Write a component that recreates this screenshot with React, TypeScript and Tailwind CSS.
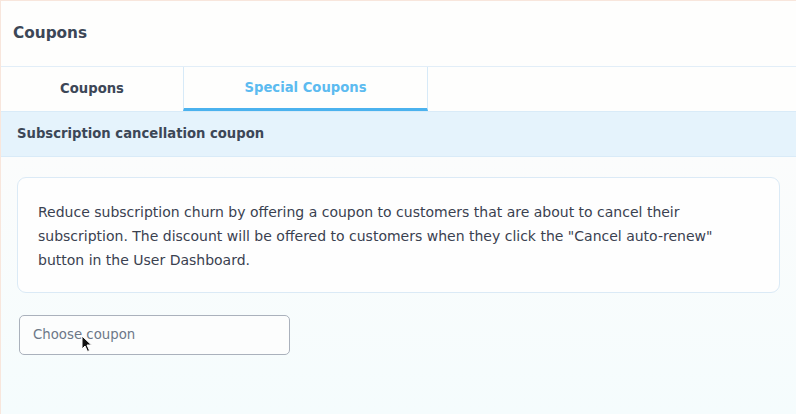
import React from "react";

export default function App() {
  const font = { fontFamily: "'DejaVu Sans', 'Noto Sans', sans-serif" };
  return (
    <div
      className="w-[796px] h-[414px] overflow-hidden flex flex-col bg-[#f8fcfd] border-l border-t border-[#f8e6dc] relative"
      style={font}
    >
      <div className="h-[66px] shrink-0 flex items-center px-[12px] bg-[#fefefd] border-b border-[#e2eef8]">
        <span className="text-[15.3px] font-bold text-[#3c4757]">Coupons</span>
      </div>
      <div className="h-[45px] shrink-0 flex bg-[#fefefd] border-b border-[#d9ebf8]">
        <div className="w-[182px] flex items-center justify-center text-[13.2px] font-bold text-[#3c4757]">
          Coupons
        </div>
        <div className="w-[245px] flex items-center justify-center text-[13.2px] font-bold text-[#5cbbf0] border-x border-[#d7eaf8] border-b-[3px] border-b-[#4bb2ee]">
          Special Coupons
        </div>
      </div>
      <div className="h-[45px] shrink-0 flex items-center px-[16px] bg-[#e5f3fc] border-b border-[#d9ebf8]">
        <span className="text-[13.2px] font-bold text-[#3c4757]">Subscription cancellation coupon</span>
      </div>
      <div className="flex-1 px-[16px] pt-[20px] bg-gradient-to-b from-[#fbfcfc] to-[#f5fcfd]">
        <div className="rounded-[9px] border border-[#dbeaf6] bg-[#fefefe] px-[20px] pt-[22px] pb-[20px]">
          <p className="text-[14px] leading-[24px] text-[#3a4150] whitespace-nowrap">
            Reduce subscription churn by offering a coupon to customers that are about to cancel their
            <br />
            subscription. The discount will be offered to customers when they click the "Cancel auto-renew"
            <br />
            button in the User Dashboard.
          </p>
        </div>
        <div className="mt-[22px] ml-[2px] w-[271px] h-[40px] rounded-[5px] border border-[#aab1bc] bg-[#fcfdfd] flex items-center px-[13px] relative">
          <span className="text-[13.3px] text-[#6d7888]">Choose coupon</span>
          <svg
            className="absolute left-[61px] top-[19px]"
            width="12"
            height="18"
            viewBox="0 0 12 18"
          >
            <path d="M1 1 L1 14 L4 11 L6.5 16.5 L8.5 15.5 L6 10 L10.5 10 Z" fill="#111" stroke="#fff" strokeWidth="1" />
          </svg>
        </div>
      </div>
    </div>
  );
}
